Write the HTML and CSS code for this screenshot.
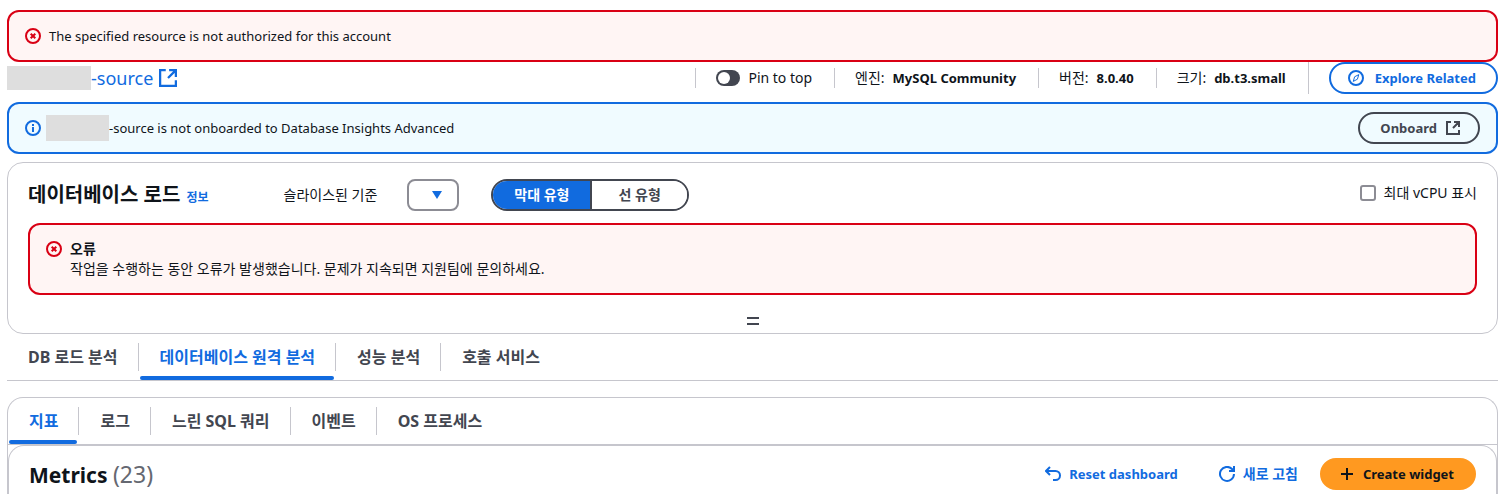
FILE: index.html
```html
<!DOCTYPE html>
<html lang="ko">

<head>
    <meta charset="UTF-8">
    <title>Database Insights</title>
    <link rel="stylesheet" href="styles.css">
</head>

<body>

    <main class="page">
        <div class="alert alert-error">
            <svg class="icon" viewBox="0 0 16 16">
                <circle cx="8" cy="8" r="7" />
                <path d="M5.7 5.7l4.6 4.6M10.3 5.7l-4.6 4.6" />
            </svg>
            <p class="alert-text">The specified resource is not authorized for this account</p>
        </div>

        <header class="instance">
            <h1 class="instance-name">
                <span class="mask"></span>
                <a href="#">-source
                    <svg class="icon icon-medium" viewBox="0 0 16 16">
                        <path d="M6 1H1v14h14v-5M9 1h6v6M15 1L8 8" />
                    </svg>
                </a>
            </h1>
            <div class="instance-info">
                <label class="info-item toggle"><input type="checkbox" role="switch"> Pin to top</label>
                <div class="info-item">엔진: <b>MySQL Community</b></div>
                <div class="info-item">버전: <b>8.0.40</b></div>
                <div class="info-item">크기: <b>db.t3.small</b></div>
            </div>
            <div class="instance-action">
                <button class="button button-icon button-blue">
                    <svg class="icon" viewBox="0 0 16 16">
                        <circle cx="8" cy="8" r="7" />
                        <path class="thin" d="M10.8 4.600L9.400 9.200 5.300 11.400 6.600 6.800z" />
                    </svg>
                    Explore Related
                </button>
            </div>
        </header>

        <div class="alert alert-info">
            <svg class="icon" viewBox="0 0 16 16">
                <circle cx="8" cy="8" r="7" />
                <path d="M8 7v5M8 4v2" />
            </svg>
            <p class="alert-text"><span class="mask mask-small"></span>-source is not onboarded to Database Insights Advanced</p>
            <button class="button button-external">
                Onboard
                <svg class="icon" viewBox="0 0 16 16">
                    <path d="M6 2H2v12h12v-4M9 2h5v5M14 2L8 8" />
                </svg>
            </button>
        </div>

        <section class="panel">
            <div class="panel-head">
                <div class="panel-heading">
                    <h2>데이터베이스 로드</h2>
                    <a class="info-link" href="#">정보</a>
                </div>
                <label class="slice-label" for="slice">슬라이스된 기준</label>
                <div class="select">
                    <select id="slice"></select>
                    <svg class="caret" viewBox="0 0 10 8">
                        <path d="M0 0h10L5 8z" />
                    </svg>
                </div>
                <div class="segments">
                    <button class="segment active">막대 유형</button>
                    <button class="segment">선 유형</button>
                </div>
                <label class="checkbox"><input type="checkbox"> 최대 vCPU 표시</label>
            </div>

            <div class="alert alert-error alert-tall">
                <svg class="icon" viewBox="0 0 16 16">
                    <circle cx="8" cy="8" r="7" />
                    <path d="M5.7 5.7l4.6 4.6M10.3 5.7l-4.6 4.6" />
                </svg>
                <div class="alert-body">
                    <h3>오류</h3>
                    <p>작업을 수행하는 동안 오류가 발생했습니다. 문제가 지속되면 지원팀에 문의하세요.</p>
                </div>
            </div>

            <button class="resize" aria-label="Resize"></button>
        </section>

        <nav class="tabs">
            <button class="tab">DB 로드 분석</button>
            <button class="tab active">데이터베이스 원격 분석</button>
            <button class="tab">성능 분석</button>
            <button class="tab">호출 서비스</button>
        </nav>

        <section class="telemetry">
            <nav class="tabs">
                <button class="tab active">지표</button>
                <button class="tab">로그</button>
                <button class="tab">느린 SQL 쿼리</button>
                <button class="tab">이벤트</button>
                <button class="tab">OS 프로세스</button>
            </nav>
            <div class="metrics">
                <h2 class="metrics-title">Metrics <span>(23)</span></h2>
                <button class="button button-icon button-link">
                    <svg class="icon" viewBox="0 0 16 16">
                        <path d="M5 1L1 5l4 4M1 5h9.500a4.500 4.500 0 0 1 0 9H8" />
                    </svg>
                    Reset dashboard
                </button>
                <button class="button button-icon button-link button-refresh">
                    <svg class="icon" viewBox="0 0 16 16">
                        <path d="M15 8a7 7 0 1 1-2-5l2 2M15 0v5h-5" />
                    </svg>
                    새로 고침
                </button>
                <button class="button button-icon button-primary">
                    <svg class="icon" viewBox="0 0 16 16">
                        <path d="M8 2v12M2 8h12" />
                    </svg>
                    Create widget
                </button>
            </div>
        </section>
    </main>

</body>

</html>
```
FILE: styles.css
```css
* {
    box-sizing: border-box;
}

body {
    margin: 0;
    background: #fff;
    color: #0f141a;
    font-family: "Noto Sans", "Noto Sans CJK KR", sans-serif;
    font-size: 13px;
    line-height: 20px;
}

h1,
h2,
h3,
p {
    margin: 0;
}

button,
select {
    font: inherit;
    cursor: pointer;
}

a {
    color: #116bdf;
    text-decoration: none;
}

.page {
    padding: 10px 6px 0 7px;
}

.icon {
    flex: none;
    width: 16px;
    height: 16px;
    fill: none;
    stroke: currentColor;
    stroke-width: 2;
}

.icon .thin {
    stroke-width: 1;
}

.icon-medium {
    width: 18px;
    height: 18px;
}

/* Alerts */
.alert {
    display: flex;
    align-items: center;
    gap: 8px;
    min-height: 52px;
    padding: 8px 16px;
    border: 2px solid;
    border-radius: 12px;
}

.alert-error {
    border-color: #d90014;
    background: #fff5f4;
}

.alert-error .icon {
    color: #d90014;
}

.alert-info {
    gap: 5px;
    border-color: #116bdf;
    background: #f0fbff;
}

.alert-info > .icon {
    color: #116bdf;
}

.alert-text {
    display: flex;
    flex: 1;
    align-items: center;
}

.alert-tall {
    align-items: flex-start;
    min-height: 72px;
    padding: 14px 16px;
}

.alert-tall .icon {
    margin-top: 2px;
}

.alert-body,
.alert-body h3 {
    font-size: 14px;
}

.mask {
    width: 84px;
    height: 24px;
    background: #dedede;
}

.mask-small {
    width: 63px;
    height: 26px;
}

/* Instance header */
.instance {
    display: flex;
    align-items: center;
    height: 32px;
    margin-bottom: 8px;
}

.instance-name {
    display: flex;
    align-items: center;
    font-size: 18px;
    font-weight: 400;
}

.instance-name a {
    display: flex;
    align-items: center;
    gap: 6px;
}

.instance-info {
    display: flex;
    margin-left: auto;
}

.info-item {
    display: flex;
    gap: 8px;
    padding: 0 22px 0 20px;
    border-left: 1px solid #c6c6cd;
    font-size: 14px;
}

.info-item b {
    font-size: 13px;
}

.instance-action {
    padding-left: 20px;
    border-left: 1px solid #c6c6cd;
}

.toggle {
    align-items: center;
}

.toggle input {
    appearance: none;
    width: 24px;
    height: 16px;
    margin: 0;
    padding: 2px;
    border-radius: 8px;
    background: #424650;
}

.toggle input::before {
    content: "";
    display: block;
    width: 12px;
    height: 12px;
    border-radius: 50%;
    background: #fff;
}

/* Buttons */
.button {
    display: flex;
    align-items: center;
    gap: 8px;
    height: 32px;
    padding: 0 20px;
    border: 2px solid #424650;
    border-radius: 16px;
    background: transparent;
    color: #424650;
    font-weight: 700;
}

.button-icon {
    padding: 0 20px 0 17px;
}

.button-external {
    padding: 0 17px 0 20px;
}

.button-blue {
    gap: 11px;
    border-color: #116bdf;
    color: #116bdf;
}

.button-link {
    border-color: transparent;
    color: #116bdf;
}

.button-refresh {
    font-size: 14px;
}

.button-primary {
    border-color: #ff9920;
    background: #ff9920;
    color: #0f141a;
}

/* Database load */
.panel {
    margin-top: 8px;
    padding: 16px 20px 0;
    border: 1px solid #c6c6cd;
    border-radius: 16px;
}

.panel-head {
    display: flex;
    align-items: center;
    margin-bottom: 12px;
    font-size: 14px;
}

.panel-heading {
    display: flex;
    align-items: baseline;
    gap: 6px;
    padding-top: 2px;
}

.panel-heading h2 {
    font-size: 20px;
}

.info-link {
    font-size: 12px;
    font-weight: 700;
}

.slice-label {
    margin-left: 75px;
}

.select {
    position: relative;
    margin: 0 32px 0 30px;
}

.select select {
    display: block;
    appearance: none;
    width: 52px;
    height: 32px;
    border: 2px solid #8c8c94;
    border-radius: 8px;
    background: #fff;
}

.caret {
    position: absolute;
    top: 12px;
    right: 17px;
    width: 10px;
    height: 8px;
    fill: #116bdf;
    pointer-events: none;
}

.segments {
    display: flex;
    overflow: hidden;
    border: 2px solid #424650;
    border-radius: 16px;
}

.segment {
    height: 28px;
    padding: 0 26px;
    border: 0;
    background: #fff;
    color: #424650;
    font-weight: 700;
}

.segment + .segment {
    border-left: 2px solid #424650;
}

.segment.active {
    padding: 0 21px;
    background: #116bdf;
    color: #fff;
}

.checkbox {
    display: flex;
    align-items: center;
    align-self: flex-start;
    gap: 8px;
    margin: 4px 0 0 auto;
}

.checkbox input {
    appearance: none;
    width: 16px;
    height: 16px;
    margin: 0;
    border: 2px solid #8c8c94;
    border-radius: 3px;
}

.resize {
    display: block;
    width: 12px;
    height: 8px;
    margin: 22px auto 8px;
    padding: 0;
    border: solid #424650;
    border-width: 2px 0;
    background: none;
}

/* Tabs */
.tabs {
    display: flex;
    height: 47px;
    border-bottom: 1px solid #c6c6cd;
}

.tab {
    position: relative;
    padding: 0 21px;
    border: 0;
    background: none;
    color: #424650;
    font-size: 16px;
    font-weight: 700;
}

/* divider between tabs */
.tab + .tab::before {
    content: "";
    position: absolute;
    top: 9px;
    bottom: 9px;
    left: -1px;
    border-left: 1px solid #c6c6cd;
}

.tab.active {
    color: #116bdf;
}

.tab.active::after {
    content: "";
    position: absolute;
    right: 2px;
    bottom: 0;
    left: 1px;
    height: 4px;
    border-radius: 2px;
    background: #116bdf;
}

/* Telemetry */
.telemetry {
    margin-top: 16px;
    border: 1px solid #c6c6cd;
    border-bottom: 0;
    border-radius: 16px 16px 0 0;
}

.metrics {
    display: flex;
    align-items: center;
    padding: 12px 20px 4px;
    border: 1px solid #c6c6cd;
    border-bottom: 0;
    border-radius: 16px 16px 0 0;
}

.metrics-title {
    margin-right: auto;
    font-size: 21px;
}

.metrics-title span {
    color: #656871;
    font-size: 23px;
    font-weight: 400;
}
```
